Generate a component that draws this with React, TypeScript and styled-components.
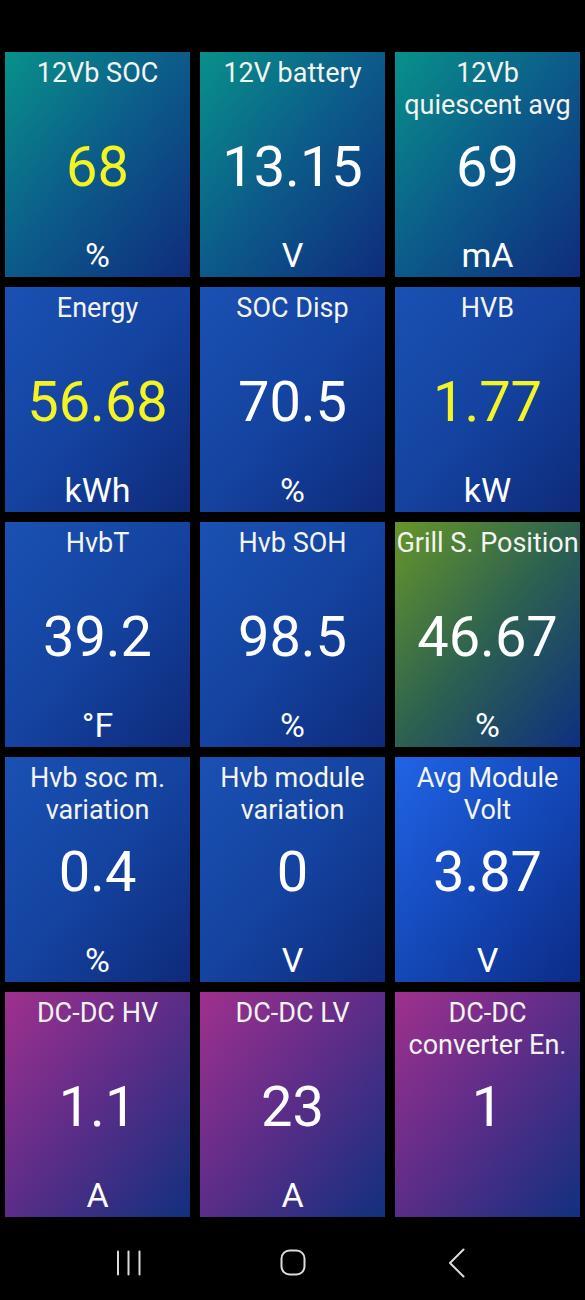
import React from "react";
import styled, { createGlobalStyle } from "styled-components";

const GlobalStyle = createGlobalStyle`
  html, body {
    margin: 0;
    padding: 0;
    background: #000000;
  }
  body {
    font-family: Roboto, "Liberation Sans", sans-serif;
  }
`;

type Tone = "teal" | "blue" | "green" | "bright" | "purple";

const gradients: Record<Tone, string> = {
  teal: "linear-gradient(to bottom right, #08918a 0%, #0c5a8a 50%, #0f2c7c 100%)",
  blue: "linear-gradient(to bottom right, #1a51b3 0%, #1443a0 50%, #0e2a7a 100%)",
  green: "linear-gradient(to bottom right, #66962a 0%, #2d6150 50%, #0e2f80 100%)",
  bright: "linear-gradient(to bottom right, #2164e6 0%, #1448b8 50%, #0c2b86 100%)",
  purple: "linear-gradient(to bottom right, #a0308e 0%, #5a2d88 50%, #11307e 100%)",
};

const Page = styled.div`
  width: 585px;
  height: 1300px;
  background: #000000;
  display: flex;
  flex-direction: column;
  overflow: hidden;
`;

const StatusBar = styled.div`
  height: 52px;
  flex: none;
`;

const Grid = styled.div`
  display: grid;
  grid-template-columns: repeat(3, 185px);
  grid-auto-rows: 225px;
  gap: 10px;
  padding: 0 5px;
`;

const Tile = styled.div<{ $tone: Tone }>`
  display: grid;
  grid-template-rows: 1fr auto 1fr;
  background: ${(p) => gradients[p.$tone]};
  color: #ffffff;
  text-align: center;
  overflow: hidden;
`;

const Title = styled.div`
  align-self: start;
  padding-top: 5px;
  font-size: 27px;
  line-height: 32px;
  color: #f4f4ee;
  white-space: pre-line;
`;

const Value = styled.div<{ $highlight?: boolean }>`
  margin-top: 5px;
  font-size: 56px;
  line-height: 66px;
  color: ${(p) => (p.$highlight ? "#f4f425" : "#ffffff")};
`;

const Unit = styled.div`
  align-self: end;
  padding-bottom: 2px;
  font-size: 34px;
  line-height: 40px;
  color: #ffffff;
`;

const NavBar = styled.div`
  flex: 1;
  display: flex;
  justify-content: center;
  align-items: center;
  padding-top: 8px;
`;

const NavButton = styled.div`
  width: 164px;
  height: 30px;
  display: flex;
  justify-content: center;
  align-items: center;
`;

type Gauge = {
  title: string;
  value: string;
  unit: string;
  tone: Tone;
  highlight?: boolean;
};

const gauges: Gauge[] = [
  { title: "12Vb SOC", value: "68", unit: "%", tone: "teal", highlight: true },
  { title: "12V battery", value: "13.15", unit: "V", tone: "teal" },
  { title: "12Vb\nquiescent avg", value: "69", unit: "mA", tone: "teal" },
  { title: "Energy", value: "56.68", unit: "kWh", tone: "blue", highlight: true },
  { title: "SOC Disp", value: "70.5", unit: "%", tone: "blue" },
  { title: "HVB", value: "1.77", unit: "kW", tone: "blue", highlight: true },
  { title: "HvbT", value: "39.2", unit: "°F", tone: "blue" },
  { title: "Hvb SOH", value: "98.5", unit: "%", tone: "blue" },
  { title: "Grill S. Position", value: "46.67", unit: "%", tone: "green" },
  { title: "Hvb soc m.\nvariation", value: "0.4", unit: "%", tone: "blue" },
  { title: "Hvb module\nvariation", value: "0", unit: "V", tone: "blue" },
  { title: "Avg Module\nVolt", value: "3.87", unit: "V", tone: "bright" },
  { title: "DC-DC HV", value: "1.1", unit: "A", tone: "purple" },
  { title: "DC-DC LV", value: "23", unit: "A", tone: "purple" },
  { title: "DC-DC\nconverter En.", value: "1", unit: "", tone: "purple" },
];

const RecentsIcon = () => (
  <svg width="26" height="26" viewBox="0 0 26 26">
    <g stroke="#dcdcdc" strokeWidth="2" strokeLinecap="round">
      <line x1="2" y1="1.5" x2="2" y2="24.5" />
      <line x1="12.5" y1="1.5" x2="12.5" y2="24.5" />
      <line x1="23.5" y1="1.5" x2="23.5" y2="24.5" />
    </g>
  </svg>
);

const HomeIcon = () => (
  <svg width="26" height="27" viewBox="0 0 26 27">
    <rect x="1.5" y="1.5" width="23" height="24" rx="8" fill="none" stroke="#dcdcdc" strokeWidth="2" />
  </svg>
);

const BackIcon = () => (
  <svg width="18" height="30" viewBox="0 0 18 30">
    <polyline points="15.5,1.5 2,15 15.5,28.5" fill="none" stroke="#dcdcdc" strokeWidth="2" strokeLinecap="round" strokeLinejoin="round" />
  </svg>
);

const App: React.FC = () => {
  return (
    <Page>
      <GlobalStyle />
      <StatusBar />
      <Grid>
        {gauges.map((g) => (
          <Tile key={g.title} $tone={g.tone}>
            <Title>{g.title}</Title>
            <Value $highlight={g.highlight}>{g.value}</Value>
            <Unit>{g.unit}</Unit>
          </Tile>
        ))}
      </Grid>
      <NavBar>
        <NavButton>
          <RecentsIcon />
        </NavButton>
        <NavButton>
          <HomeIcon />
        </NavButton>
        <NavButton>
          <BackIcon />
        </NavButton>
      </NavBar>
    </Page>
  );
};

export default App;
